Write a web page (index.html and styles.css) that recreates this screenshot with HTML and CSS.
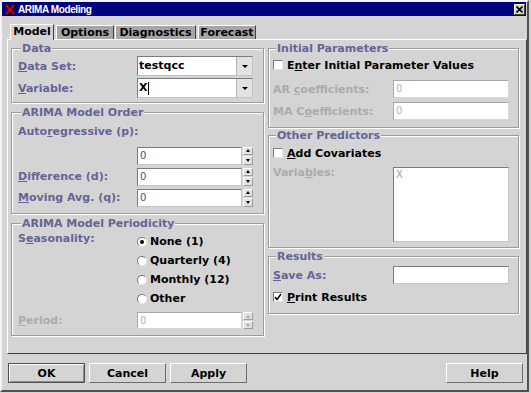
FILE: index.html
```html
<!DOCTYPE html>
<html lang="en">
  <head>
    <meta charset="utf-8" />
    <title>ARIMA Modeling</title>
    <link rel="stylesheet" href="styles.css">
  </head>
  <body>
    <div class="window">
      <div class="titlebar">
        <svg class="app-icon" width="10" height="11" viewBox="0 0 10 11">
          <path d="M1.5 1.5 L8.5 9.5 M8.5 1.5 L1.5 9.5" stroke="#300000" stroke-width="3.2" stroke-linecap="round" fill="none" />
          <path d="M1.5 1.5 L8.5 9.5 M8.5 1.5 L1.5 9.5" stroke="#e00000" stroke-width="1.8" stroke-linecap="round" fill="none" />
        </svg>
        <span class="title">ARIMA Modeling</span>
        <span class="close">
          <svg width="7" height="7" viewBox="0 0 7 7">
            <path d="M0.5 0.5 L6.5 6.5 M6.5 0.5 L0.5 6.5" stroke="#000" stroke-width="1.6" fill="none" />
          </svg>
        </span>
      </div>

      <div class="tabs">
        <div class="tab tab-model active">Model</div>
        <div class="tab tab-options">Options</div>
        <div class="tab tab-diag">Diagnostics</div>
        <div class="tab tab-forecast">Forecast</div>
      </div>

      <div class="panel">
        <div class="column column-left">
          <div class="group group-data">
            <div class="group-title">Data</div>
            <div class="row row-first">
              <span class="label"><u>D</u>ata Set:</span>
              <div class="combo">
                <span class="combo-text">testqcc</span>
                <span class="combo-btn"><i class="arrow-down"></i></span>
              </div>
            </div>
            <div class="row row-second">
              <span class="label"><u>V</u>ariable:</span>
              <div class="combo">
                <span class="combo-text">X<b class="caret"></b></span>
                <span class="combo-btn"><i class="arrow-down"></i></span>
              </div>
            </div>
          </div>

          <div class="group group-order">
            <div class="group-title">ARIMA Model Order</div>
            <div class="label-line">Auto<u>r</u>egressive (p):</div>
            <div class="spin-row spin-row-first">
              <span class="label"></span>
              <div class="spinner">
                <span class="field">0</span>
                <span class="spin-btns"><i class="spin-up"></i><i class="spin-down"></i></span>
              </div>
            </div>
            <div class="spin-row">
              <span class="label"><u>D</u>ifference (d):</span>
              <div class="spinner">
                <span class="field">0</span>
                <span class="spin-btns"><i class="spin-up"></i><i class="spin-down"></i></span>
              </div>
            </div>
            <div class="spin-row">
              <span class="label"><u>M</u>oving Avg. (q):</span>
              <div class="spinner">
                <span class="field">0</span>
                <span class="spin-btns"><i class="spin-up"></i><i class="spin-down"></i></span>
              </div>
            </div>
          </div>

          <div class="group group-period">
            <div class="group-title">ARIMA Model Periodicity</div>
            <div class="season">
              <span class="label label-top">S<u>e</u>asonality:</span>
              <div class="radios">
                <div class="radio checked"><i class="radio-box"></i>None (1)</div>
                <div class="radio"><i class="radio-box"></i>Quarterly (4)</div>
                <div class="radio"><i class="radio-box"></i>Monthly (12)</div>
                <div class="radio"><i class="radio-box"></i>Other</div>
              </div>
            </div>
            <div class="period-row">
              <span class="label disabled"><u>P</u>eriod:</span>
              <div class="spinner spinner-disabled">
                <span class="field">0</span>
                <span class="spin-btns"><i class="spin-up"></i><i class="spin-down"></i></span>
              </div>
            </div>
          </div>
        </div>

        <div class="column column-right">
          <div class="group group-init">
            <div class="group-title">Initial Parameters</div>
            <div class="check-row">
              <i class="check-box"></i>E<u>n</u>ter Initial Parameter Values
            </div>
            <div class="field-row field-row-first">
              <span class="label disabled">AR <u>c</u>oefficients:</span>
              <span class="text-field disabled">0</span>
            </div>
            <div class="field-row">
              <span class="label disabled">MA C<u>o</u>efficients:</span>
              <span class="text-field disabled">0</span>
            </div>
          </div>

          <div class="group group-other">
            <div class="group-title">Other Predictors</div>
            <div class="check-row check-row-other">
              <i class="check-box"></i><u>A</u>dd Covariates
            </div>
            <div class="list-row">
              <span class="label disabled">Varia<u>b</u>les:</span>
              <div class="listbox">X</div>
            </div>
          </div>

          <div class="group group-results">
            <div class="group-title">Results</div>
            <div class="field-row field-row-save">
              <span class="label"><u>S</u>ave As:</span>
              <span class="text-field"></span>
            </div>
            <div class="check-row check-row-print">
              <i class="check-box">
                <svg width="8" height="8" viewBox="0 0 8 8">
                  <path d="M1 4 L3 6.5 L7 1" stroke="#000" stroke-width="1.4" fill="none" />
                </svg>
              </i><u>P</u>rint Results
            </div>
          </div>
        </div>
      </div>

      <div class="buttons">
        <button class="btn btn-default">OK</button>
        <button class="btn">Cancel</button>
        <button class="btn">Apply</button>
        <button class="btn btn-help">Help</button>
      </div>
    </div>
  </body>
</html>
```

FILE: styles.css
```css
* {
  box-sizing: border-box;
}
body {
  margin: 0;
  background: #d4d4d4;
  font-family: "DejaVu Sans", sans-serif;
  font-size: 11px;
  font-weight: bold;
  color: #000;
}
u {
  text-decoration: underline;
}
.window {
  width: 529px;
  height: 392px;
  border: 2px solid;
  border-color: #f4f4f4 #505050 #505050 #f4f4f4;
  background: #d4d4d4;
  display: flex;
  flex-direction: column;
}

/* title bar */
.titlebar {
  height: 14px;
  margin-right: 1px;
  background: #000080;
  display: flex;
  align-items: center;
  padding: 0 1px 0 3px;
}
.app-icon {
  display: block;
}
.title {
  margin-left: 3px;
  color: #fff;
  font-family: "Liberation Sans", sans-serif;
  font-size: 10px;
  font-weight: bold;
  letter-spacing: -0.4px;
}
.close {
  margin-left: auto;
  width: 11px;
  height: 11px;
  background: #d4d4d4;
  border: 1px solid;
  border-color: #fff #404040 #404040 #fff;
  display: flex;
  align-items: center;
  justify-content: center;
}
.close svg {
  display: block;
}

/* tabs */
.tabs {
  height: 15px;
  margin: 8px 0 0 8px;
  display: flex;
  align-items: flex-end;
}
.tab {
  height: 14px;
  background: #a6a6a6;
  border: 1px solid;
  border-color: #fff #404040 transparent #fff;
  border-bottom: none;
  line-height: 13px;
  text-align: center;
  white-space: nowrap;
}
.tab.active {
  height: 16px;
  margin-bottom: -1px;
  background: #d4d4d4;
  z-index: 1;
}
.tab-model {
  width: 44px;
}
.tab-options {
  width: 58px;
  margin-left: 2px;
}
.tab-diag {
  width: 81px;
  margin-left: 1px;
}
.tab-forecast {
  width: 58px;
  margin-left: 2px;
}

/* panel */
.panel {
  width: 520px;
  height: 315px;
  margin-left: 5px;
  border: 1px solid;
  border-color: #fff #404040 #404040 #fff;
  padding: 0 7px 0 3px;
  display: flex;
  gap: 4px;
}
.column {
  display: flex;
  flex-direction: column;
}
.column-left {
  width: 253px;
}
.column-right {
  width: 251px;
}
.group {
  border: 1px solid #9c9c9c;
  box-shadow: inset 1px 1px 0 #fff, 1px 1px 0 #fff;
}
.column-left .group {
  padding-left: 6px;
}
.column-right .group {
  padding-left: 4px;
}
.group-title {
  display: table;
  margin: -7px 0 0 3px;
  padding: 0 1px;
  background: #d4d4d4;
  color: #646496;
  line-height: 13px;
  white-space: nowrap;
}
.group-data {
  margin-top: 8px;
  height: 55px;
}
.group-order {
  margin-top: 9px;
  height: 102px;
}
.group-period {
  margin-top: 9px;
  height: 113px;
}
.group-init {
  margin-top: 8px;
  height: 80px;
}
.group-other {
  margin-top: 7px;
  height: 113px;
}
.group-results {
  margin-top: 8px;
  height: 58px;
}

.label {
  color: #646496;
  white-space: nowrap;
  flex: none;
}
.column-left .label {
  width: 119px;
}
.column-right .label {
  width: 120px;
}
.label.disabled {
  color: #ababab;
}
.label-line {
  color: #646496;
  height: 14px;
  line-height: 14px;
  margin-top: 6px;
}

/* combo boxes */
.row {
  height: 20px;
  display: flex;
  align-items: center;
}
.row-first {
  margin-top: 1px;
}
.row-second {
  margin-top: 2px;
}
.combo {
  width: 116px;
  height: 20px;
  display: flex;
  background: #fff;
  border: 1px solid;
  border-color: #7c7c7c #c4c4c4 #c4c4c4 #7c7c7c;
}
.combo-text {
  flex: 1;
  padding-left: 1px;
  line-height: 18px;
  display: flex;
  align-items: center;
}
.caret {
  width: 1px;
  height: 13px;
  margin-left: 1px;
  background: #000;
}
.combo-btn {
  width: 16px;
  background: #e2e2e2;
  border-left: 1px solid #b4b4b4;
  display: flex;
  align-items: center;
  justify-content: center;
}
.arrow-down {
  width: 0;
  height: 0;
  border-left: 3px solid transparent;
  border-right: 3px solid transparent;
  border-top: 3px solid #000;
}

/* spinners */
.spin-row {
  height: 21px;
  display: flex;
  align-items: center;
}
.spin-row-first {
  margin-top: 6px;
}
.spinner {
  width: 116px;
  height: 18px;
  display: flex;
  gap: 1px;
}
.field,
.text-field {
  background: #fff;
  border: 1px solid;
  border-color: #7c7c7c #c4c4c4 #c4c4c4 #7c7c7c;
  font-weight: normal;
  font-size: 10px;
  color: #555;
  padding-left: 2px;
  line-height: 16px;
}
.field {
  width: 105px;
  height: 18px;
}
.spin-btns {
  width: 10px;
  display: flex;
  flex-direction: column;
  gap: 1px;
}
.spin-up,
.spin-down {
  flex: 1;
  background: #e2e2e2;
  border: 1px solid;
  border-color: #fff #9c9c9c #9c9c9c #fff;
  display: flex;
  align-items: center;
  justify-content: center;
}
.spin-up::after,
.spin-down::after {
  content: "";
  width: 0;
  height: 0;
  border-left: 2.5px solid transparent;
  border-right: 2.5px solid transparent;
}
.spin-up::after {
  border-bottom: 3px solid #000;
}
.spin-down::after {
  border-top: 3px solid #000;
}
.spinner-disabled .field,
.text-field.disabled {
  color: #b4b4b4;
  border-color: #a8a8a8 #d8d8d8 #d8d8d8 #a8a8a8;
}
.spinner-disabled .spin-up::after {
  border-bottom-color: #a8a8a8;
}
.spinner-disabled .spin-down::after {
  border-top-color: #a8a8a8;
}

/* seasonality */
.season {
  margin-top: 2px;
  display: flex;
}
.label-top {
  line-height: 13px;
}
.radio {
  height: 19px;
  display: flex;
  align-items: center;
}
.radio-box {
  width: 10px;
  height: 10px;
  margin-right: 3px;
  border-radius: 50%;
  border: 1px solid;
  border-color: #7c7c7c #e8e8e8 #e8e8e8 #7c7c7c;
  background: #fff;
  display: flex;
  align-items: center;
  justify-content: center;
}
.radio.checked .radio-box::after {
  content: "";
  width: 4px;
  height: 4px;
  border-radius: 50%;
  background: #000;
}
.period-row {
  margin-top: 4px;
  height: 17px;
  display: flex;
  align-items: center;
}
.period-row .spinner {
  height: 17px;
}
.period-row .field {
  height: 17px;
  line-height: 15px;
}

/* right column */
.check-row {
  height: 20px;
  display: flex;
  align-items: center;
  white-space: nowrap;
}
.check-row-other {
  margin-top: 1px;
}
.check-row-print {
  margin-top: 4px;
  height: 18px;
}
.check-box {
  width: 10px;
  height: 10px;
  margin-right: 4px;
  background: #fff;
  border: 1px solid;
  border-color: #7c7c7c #e8e8e8 #e8e8e8 #7c7c7c;
  display: flex;
  align-items: center;
  justify-content: center;
}
.check-box svg {
  display: block;
}
.field-row {
  height: 18px;
  margin-top: 4px;
  display: flex;
  align-items: center;
}
.field-row-first {
  margin-top: 5px;
}
.field-row-save {
  margin-top: 3px;
}
.text-field {
  width: 116px;
  height: 18px;
}
.list-row {
  margin-top: 4px;
  display: flex;
  align-items: flex-start;
}
.list-row .label {
  line-height: 13px;
  margin-top: -1px;
}
.listbox {
  width: 116px;
  height: 75px;
  background: #fff;
  border: 1px solid;
  border-color: #7c7c7c #c4c4c4 #c4c4c4 #7c7c7c;
  font-weight: normal;
  font-size: 10px;
  color: #a0a0a0;
  padding: 1px 2px;
}

/* buttons */
.buttons {
  margin-top: 9px;
  padding: 0 4px 0 6px;
  display: flex;
  gap: 4px;
}
.btn {
  width: 77px;
  height: 20px;
  padding: 0;
  background: #d4d4d4;
  border: 1px solid;
  border-color: #fff #6c6c6c #6c6c6c #fff;
  font-family: "DejaVu Sans", sans-serif;
  font-size: 11px;
  font-weight: bold;
  color: #000;
}
.btn-default {
  border-color: #505050;
  box-shadow: inset 1px 1px 0 #fff, inset -1px -1px 0 #8c8c8c;
}
.btn-help {
  margin-left: auto;
}
```
